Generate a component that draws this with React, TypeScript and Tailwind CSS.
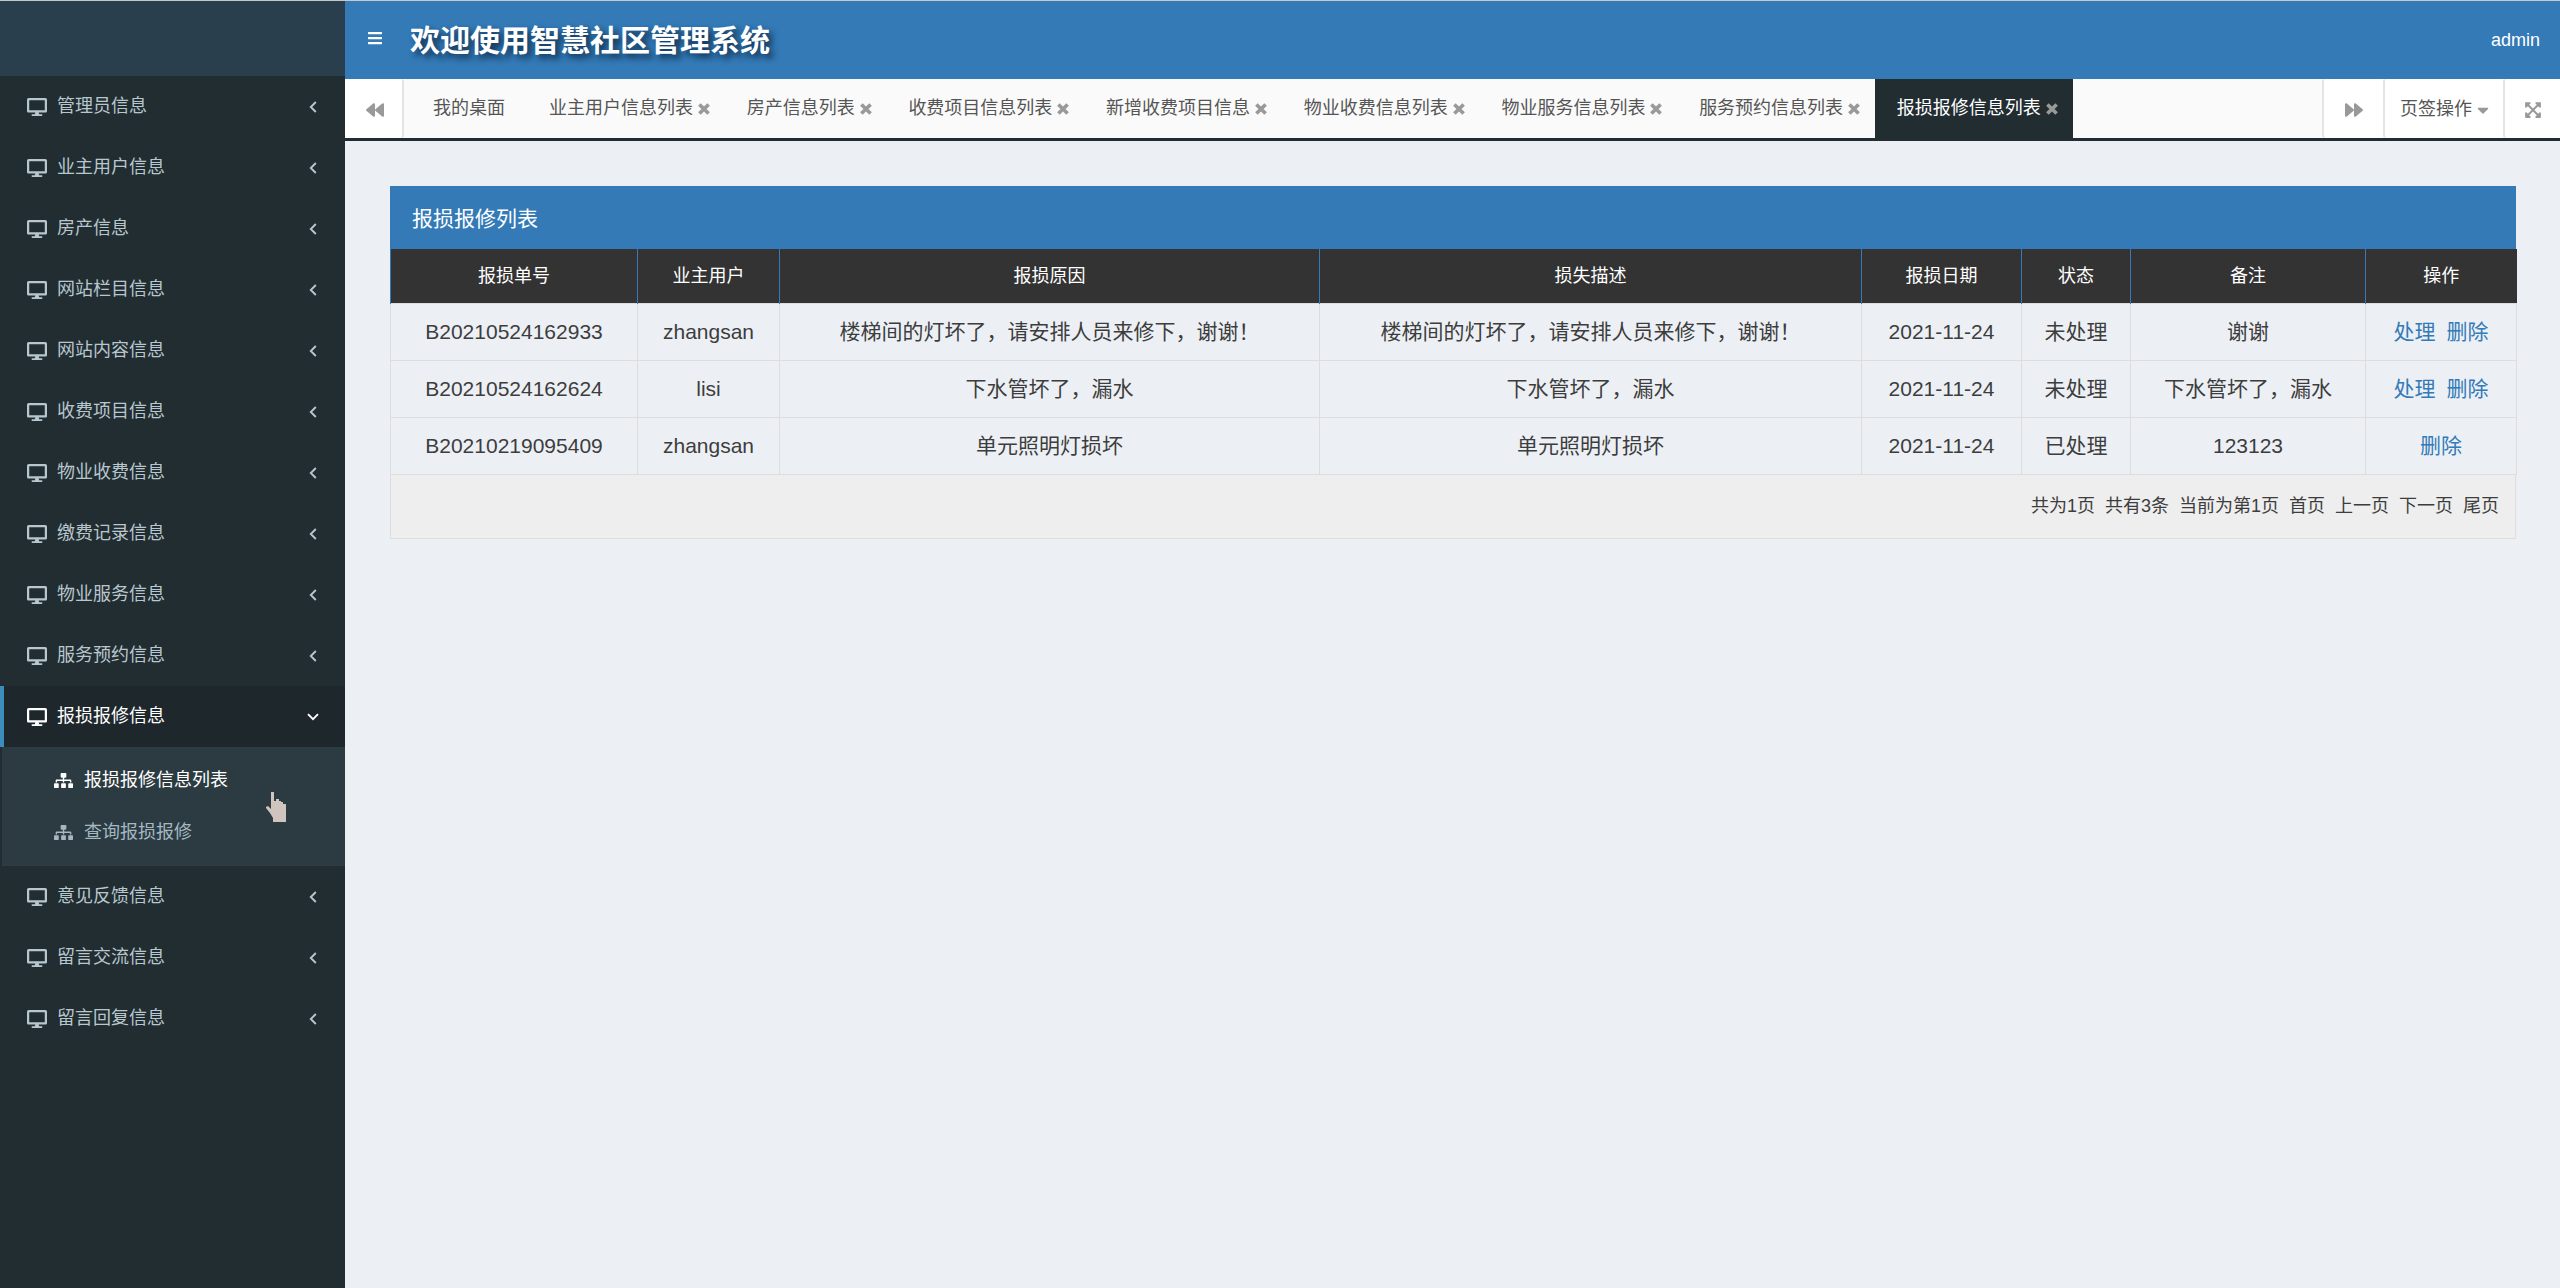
import { FaBackward, FaBars, FaCaretDown, FaDesktop, FaExpandArrowsAlt, FaForward, FaSitemap } from 'react-icons/fa';

const menusTop = ['管理员信息', '业主用户信息', '房产信息', '网站栏目信息', '网站内容信息', '收费项目信息', '物业收费信息', '缴费记录信息', '物业服务信息', '服务预约信息'];
const menusBottom = ['意见反馈信息', '留言交流信息', '留言回复信息'];

const tabs = ['业主用户信息列表', '房产信息列表', '收费项目信息列表', '新增收费项目信息', '物业收费信息列表', '物业服务信息列表', '服务预约信息列表'];

const rows = [
  { no: 'B20210524162933', user: 'zhangsan', reason: '楼梯间的灯坏了，请安排人员来修下，谢谢！', state: '未处理', note: '谢谢', canHandle: true },
  { no: 'B20210524162624', user: 'lisi', reason: '下水管坏了，漏水', state: '未处理', note: '下水管坏了，漏水', canHandle: true },
  { no: 'B20210219095409', user: 'zhangsan', reason: '单元照明灯损坏', state: '已处理', note: '123123', canHandle: false },
];

const pageInfo = ['共为1页', '共有3条', '当前为第1页', '首页', '上一页', '下一页', '尾页'];

function AngleLeft() {
  return (
    <svg width="8" height="12" viewBox="0 0 8 12" fill="none" stroke="currentColor" strokeWidth="1.9">
      <path d="M6.8 1 1.8 6l5 5" />
    </svg>
  );
}

function AngleDown() {
  return (
    <svg width="12" height="8" viewBox="0 0 12 8" fill="none" stroke="currentColor" strokeWidth="1.9">
      <path d="M1 1.2l5 5 5-5" />
    </svg>
  );
}

function CloseIcon() {
  return (
    <svg width="12" height="12" viewBox="0 0 12 12" fill="none" stroke="#999" strokeWidth="3.6">
      <path d="M1.4 1.4l9.2 9.2M10.6 1.4 1.4 10.6" />
    </svg>
  );
}

function MenuItem({ label }: { label: string }) {
  return (
    <div className="flex h-[61px] items-center pl-[27px] pr-[28px] text-[18px] text-[#b8c7ce]">
      <FaDesktop size={20} className="mr-[10px]" />
      <span className="flex-1">{label}</span>
      <AngleLeft />
    </div>
  );
}

function Sidebar() {
  return (
    <aside className="w-[345px] shrink-0 bg-[#222d32]">
      <div className="h-[75px] bg-[#2a3f4d]" />
      {menusTop.map((m) => <MenuItem key={m} label={m} />)}
      <div className="flex h-[61px] items-center border-l-4 border-[#3c8dbc] bg-[#1e282c] pl-[23px] pr-[26px] text-[18px] text-white">
        <FaDesktop size={20} className="mr-[10px]" />
        <span className="flex-1">报损报修信息</span>
        <AngleDown />
      </div>
      <div className="ml-[2px] h-[119px] bg-[#2c3b41] pt-[7px] pl-[52px] text-[18px]">
        <div className="flex h-[52px] items-center text-white">
          <FaSitemap size={19} className="mr-[11px]" />
          报损报修信息列表
        </div>
        <div className="flex h-[52px] items-center text-[#a3b8c2]">
          <FaSitemap size={19} className="mr-[11px]" />
          查询报损报修
        </div>
      </div>
      {menusBottom.map((m) => <MenuItem key={m} label={m} />)}
    </aside>
  );
}

function TabBar() {
  return (
    <div className="flex h-[62px] border-b-[3px] border-[#222d32] bg-[#fafafa] text-[18px] text-[#555]">
      <div className="flex w-[59px] items-center justify-center rounded-r-[3px] border-r-2 border-[#e4e4e4] bg-white pt-[2px] pl-[3px] text-[#999]">
        <FaBackward size={18} />
      </div>
      <div className="ml-[7px] flex flex-1">
        <div className="flex w-[116px] items-center justify-center">我的桌面</div>
        {tabs.map((t) => (
          <div key={t} className="flex items-center gap-[5px] pl-[22px] pr-[14.7px]">
            {t}
            <CloseIcon />
          </div>
        ))}
        <div className="flex items-center gap-[5px] bg-[#222d32] pl-[22px] pr-[15px] text-white">
          报损报修信息列表
          <CloseIcon />
        </div>
      </div>
      <div className="flex w-[61px] items-center justify-center rounded-l-[3px] border-l-2 border-[#e4e4e4] bg-white pt-[2px] text-[#999]">
        <FaForward size={18} />
      </div>
      <div className="flex w-[120px] items-center justify-start gap-[2px] rounded-l-[3px] border-l-2 border-[#e4e4e4] bg-white pt-[2px] pl-[15px]">
        页签操作
        <FaCaretDown size={18} className="text-[#999]" />
      </div>
      <div className="flex w-[58px] items-center justify-center rounded-l-[3px] border-l-2 border-[#e4e4e4] bg-white pt-[2px] text-[#999]">
        <FaExpandArrowsAlt size={18} />
      </div>
    </div>
  );
}

function RepairTable() {
  return (
    <div className="mx-[45px] mt-[45px] w-[2126px]">
      <div className="flex h-[63px] items-center bg-[#337ab7] pl-[22px] pt-[2px] text-[21px] text-white">报损报修列表</div>
      <table className="w-full table-fixed border-collapse">
        <thead>
          <tr className="h-[54px] bg-[#333] text-[18px] text-white">
            <th className="w-[247px] border-x border-[#337ab7] pt-[2px] font-normal">报损单号</th>
            <th className="w-[142px] border-r border-[#337ab7] pt-[2px] font-normal">业主用户</th>
            <th className="w-[540px] border-r border-[#337ab7] pt-[2px] font-normal">报损原因</th>
            <th className="w-[542px] border-r border-[#337ab7] pt-[2px] font-normal">损失描述</th>
            <th className="w-[160px] border-r border-[#337ab7] pt-[2px] font-normal">报损日期</th>
            <th className="w-[109px] border-r border-[#337ab7] pt-[2px] font-normal">状态</th>
            <th className="w-[235px] border-r border-[#337ab7] pt-[2px] font-normal">备注</th>
            <th className="w-[151px] pt-[2px] font-normal">操作</th>
          </tr>
        </thead>
        <tbody className="text-center text-[21px] text-[#3d3d3d]">
          {rows.map((r) => (
            <tr key={r.no} className="h-[57px]">
              <td className="border border-[#ddd]">{r.no}</td>
              <td className="border border-[#ddd]">{r.user}</td>
              <td className="border border-[#ddd]">{r.reason}</td>
              <td className="border border-[#ddd]">{r.reason}</td>
              <td className="border border-[#ddd]">2021-11-24</td>
              <td className="border border-[#ddd]">{r.state}</td>
              <td className="border border-[#ddd]">{r.note}</td>
              <td className="border border-[#ddd] text-[#337ab7]">
                {r.canHandle && <a className="mr-[11px]">处理</a>}
                <a>删除</a>
              </td>
            </tr>
          ))}
        </tbody>
      </table>
      <div className="flex h-[64px] items-center justify-end gap-[10px] border-x border-b border-[#ddd] bg-[#eee] pr-[16px] text-[18px] text-[#3d3d3d]">
        {pageInfo.map((p) => <span key={p}>{p}</span>)}
      </div>
    </div>
  );
}

export default function App() {
  return (
    <div className="h-[1288px] overflow-hidden border-t border-[#c8c8c8] font-['Liberation_Sans','Noto_Sans_CJK_SC',sans-serif]">
      <div className="relative flex h-[1287px]">
        <Sidebar />
        <main className="flex-1 bg-[#ecf0f5]">
          <header className="flex h-[78px] items-center bg-[#337ab7] pl-[22px] pr-[21px] text-white">
            <FaBars size={16} className="mr-[27px] mb-[4px]" />
            <h1 className="flex-1 text-[30px] font-bold [text-shadow:4px_4px_6px_#0f2c4a]">欢迎使用智慧社区管理系统</h1>
            <span className="text-[18px]">admin</span>
          </header>
          <TabBar />
          <RepairTable />
        </main>
        {/* mouse pointer caught in the screenshot */}
        <svg className="absolute left-[266px] top-[791px]" width="20" height="30" viewBox="0 0 20 30">
          <path d="M5 0h3v9h2V7h3v2h2v1h2v2h3v18H7v-4L4 21 0 16v-1l2-1 3 3z" fill="#d0c4bf" />
        </svg>
      </div>
    </div>
  );
}
